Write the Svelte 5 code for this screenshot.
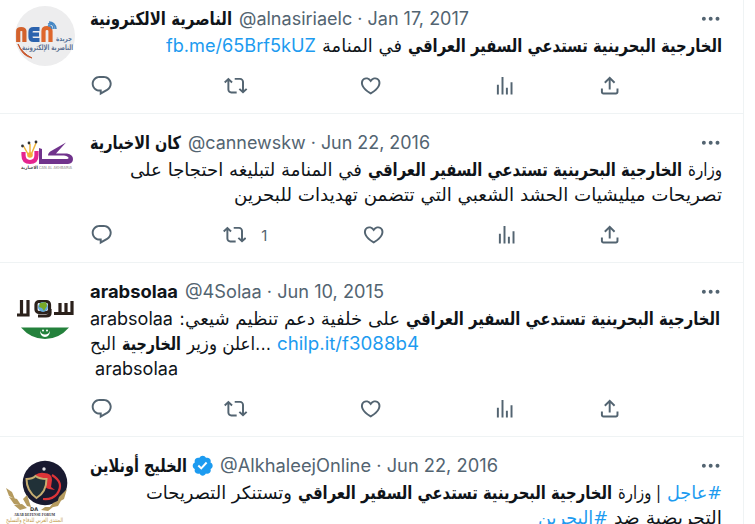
<script lang="ts">
    type Run = { text: string; width: number; bold?: boolean; link?: boolean; latin?: boolean };
    type Tweet = {
        id: string;
        name: string;
        nameWidth: number;
        latinName?: boolean;
        verified?: boolean;
        meta: string;
        metaWidth: number;
        retweets?: number;
        ltr?: boolean;
        lines: Run[][];
    };

    const query = "الخارجية البحرينية تستدعي السفير العراقي";

    const tweets: Tweet[] = [
        {
            id: "nen",
            name: "الناصرية الالكترونية",
            nameWidth: 142,
            meta: "@alnasiriaelc · Jan 17, 2017",
            metaWidth: 230,
            lines: [
                [
                    { text: query, width: 314, bold: true },
                    { text: "في المنامة", width: 80 },
                    { text: "fb.me/65Brf5kUZ", width: 150, link: true, latin: true },
                ],
            ],
        },
        {
            id: "can",
            name: "كان الاخبارية",
            nameWidth: 91,
            meta: "@cannewskw · Jun 22, 2016",
            metaWidth: 242,
            retweets: 1,
            lines: [
                [
                    { text: "وزارة", width: 34 },
                    { text: query, width: 314, bold: true },
                    { text: "في المنامة لتبليغه احتجاجا على", width: 232 },
                ],
                [{ text: "تصريحات ميليشيات الحشد الشعبي التي تتضمن تهديدات للبحرين", width: 488 }],
            ],
        },
        {
            id: "sola",
            name: "arabsolaa",
            nameWidth: 88,
            latinName: true,
            meta: "@4Solaa · Jun 10, 2015",
            metaWidth: 199,
            ltr: true,
            lines: [
                [
                    { text: "arabsolaa", width: 83, latin: true },
                    { text: "على خلفية دعم تنظيم شيعي:", width: 221 },
                    { text: query, width: 314, bold: true },
                ],
                [
                    { text: "البح", width: 26 },
                    { text: "الخارجية", width: 59, bold: true },
                    { text: "...اعلن وزير", width: 84 },
                    { text: "chilp.it/f3088b4", width: 142, link: true, latin: true },
                ],
                [{ text: "\u00a0arabsolaa", width: 88, latin: true }],
            ],
        },
        {
            id: "forum",
            name: "الخليج أونلاين",
            nameWidth: 97,
            verified: true,
            meta: "@AlkhaleejOnline · Jun 22, 2016",
            metaWidth: 278,
            lines: [
                [
                    { text: "#عاجل", width: 55, link: true },
                    { text: "| وزارة", width: 43 },
                    { text: query, width: 314, bold: true },
                    { text: "وتستنكر التصريحات", width: 146 },
                ],
                [
                    { text: "التحريضية ضد", width: 108 },
                    { text: "#البحرين", width: 70, link: true },
                ],
            ],
        },
    ];

    const icons = {
        reply: "M1.751 10c0-4.42 3.584-8 8.005-8h4.366c4.49 0 8.129 3.64 8.129 8.13 0 2.96-1.607 5.68-4.196 7.11l-8.054 4.46v-3.69h-.067c-4.49.1-8.183-3.51-8.183-8.01zm8.005-6c-3.317 0-6.005 2.69-6.005 6 0 3.37 2.77 6.08 6.138 6.01l.351-.01h1.761v2.3l5.087-2.81c1.951-1.08 3.163-3.13 3.163-5.36 0-3.39-2.744-6.13-6.129-6.13H9.756z",
        retweet: "M4.5 3.88l4.432 4.14-1.364 1.46L5.5 7.55V16c0 1.1.896 2 2 2H13v2H7.5c-2.209 0-4-1.79-4-4V7.55L1.432 9.48.068 8.02 4.5 3.88zM16.5 6H11V4h5.5c2.209 0 4 1.79 4 4v8.45l2.068-1.93 1.364 1.46-4.432 4.14-4.432-4.14 1.364-1.46 2.068 1.93V8c0-1.1-.896-2-2-2z",
        like: "M16.697 5.5c-1.222-.06-2.679.51-3.89 2.16l-.805 1.09-.806-1.09C9.984 6.01 8.526 5.44 7.304 5.5c-1.243.07-2.349.78-2.91 1.91-.552 1.12-.633 2.78.479 4.82 1.074 1.97 3.257 4.27 7.129 6.61 3.87-2.34 6.052-4.64 7.126-6.61 1.111-2.04 1.03-3.7.477-4.82-.561-1.13-1.666-1.84-2.908-1.91zm4.187 7.69c-1.351 2.48-4.001 5.12-8.379 7.67l-.503.3-.504-.3c-4.379-2.55-7.029-5.19-8.382-7.67-1.36-2.5-1.41-4.86-.514-6.67.887-1.79 2.647-2.91 4.601-3.01 1.651-.09 3.368.56 4.798 2.01 1.429-1.45 3.146-2.1 4.796-2.01 1.954.1 3.714 1.22 4.601 3.01.896 1.81.846 4.17-.514 6.67z",
        views: "M8.75 21V3h2v18h-2zM18 21V8.5h2V21h-2zM4 21l.004-10h2L6 21H4zm9.248 0v-7h2v7h-2z",
        share: "M12 2.59l5.7 5.7-1.41 1.42L13 6.41V16h-2V6.41l-3.3 3.3-1.41-1.42L12 2.59zM21 15l-.02 3.51c0 1.38-1.12 2.49-2.5 2.49H5.5C4.11 21 3 19.88 3 18.5V15h2v3.5c0 .28.22.5.5.5h12.98c.28 0 .5-.22.5-.5L19 15h2z",
        more: "M3 12c0-1.1.9-2 2-2s2 .9 2 2-.9 2-2 2-2-.9-2-2zm9 2c1.1 0 2-.9 2-2s-.9-2-2-2-2 .9-2 2 .9 2 2 2zm7 0c1.1 0 2-.9 2-2s-.9-2-2-2-2 .9-2 2 .9 2 2 2z",
        verified: "M22.25 12c0-1.43-.88-2.67-2.19-3.34.46-1.39.2-2.9-.81-3.91s-2.52-1.27-3.91-.81c-.66-1.31-1.91-2.19-3.34-2.19s-2.67.88-3.33 2.19c-1.4-.46-2.91-.2-3.92.81s-1.26 2.52-.8 3.91c-1.31.67-2.2 1.91-2.2 3.34s.89 2.67 2.2 3.34c-.46 1.39-.21 2.9.8 3.91s2.52 1.26 3.91.81c.67 1.31 1.91 2.19 3.34 2.19s2.68-.88 3.34-2.19c1.39.45 2.9.2 3.91-.81s1.27-2.52.81-3.91c1.31-.67 2.19-1.91 2.19-3.34zm-11.71 4.2L6.8 12.46l1.41-1.42 2.26 2.26 4.8-5.23 1.47 1.36-6.2 6.77z",
    };

    // Squeeze or stretch a text run so that it fills its slot exactly.
    function fit(node: HTMLElement, width: number) {
        const natural = node.getBoundingClientRect().width;
        if (natural > 0) node.style.transform = `scaleX(${width / natural})`;
    }
</script>

{#snippet icon(name: keyof typeof icons)}
    <svg class="icon" class:badge={name === "verified"} viewBox="0 0 24 24" aria-hidden="true"><path d={icons[name]} /></svg>
{/snippet}

{#snippet fitted(text: string, width: number, latin = false)}
    <span class="slot" class:latin dir={latin ? "ltr" : "rtl"} style:width="{width}px"><span class="run" use:fit={width}>{text}</span></span>
{/snippet}

{#snippet avatar(id: string)}
    <svg class="avatar" viewBox="0 0 60 60" aria-hidden="true">
        {#if id === "nen"}
            <circle cx="30" cy="30" r="30" fill="#ededee" />
            <g fill="none" stroke-width="4.2">
                <path d="M3.200 36V25q0-2 3-2t3.200 2v11" stroke="#d3622d" />
                <path d="M24.500 23h-6q-3 0-3 3v5q0 3 3 3h6M16 28.500h8" stroke="#2b63ae" />
                <path d="M28.500 36V25q0-3 3.500-3t3.500 3v11" stroke="#de672c" />
            </g>
            <g fill="none" stroke="#4386c4" stroke-width="1.600">
                <path d="M33 20q3-1 4 3M33 18q6-1 6 5M34 16q6 0 7 7" />
            </g>
            <path d="M3 38q4 9 14 14-10-2-14-14z" fill="#c9572c" stroke="#c9572c" />
            <text x="57" y="35" font-size="7" font-weight="bold" fill="#54739c" textLength="16" lengthAdjust="spacingAndGlyphs" direction="rtl">جريدة</text>
            <text x="58" y="44" font-size="7.500" font-weight="bold" fill="#5d7293" textLength="51" lengthAdjust="spacingAndGlyphs" direction="rtl">الناصرية الإلكترونية</text>
        {:else if id === "can"}
            <path d="M8.500 22v3q0 7 6.500 7t6.500-7v-4" fill="none" stroke="#e5248f" stroke-width="4.200" />
            <path d="M8.500 16l5 9M21 13l-5 12M15 14v10" fill="none" stroke="#efb63b" stroke-width="1.500" />
            <circle cx="15" cy="25" r="2.800" fill="#f3ad3a" />
            <circle cx="7.500" cy="16" r="1.400" fill="#333" />
            <circle cx="14" cy="13" r="1.400" fill="#333" />
            <circle cx="21" cy="12" r="1.400" fill="#333" />
            <path d="M24 18l3 1v10h25q2.500-.5 1-2t-4-1.500H33q0-3 4-5l14-8-10 11h11q6 1 6 5.500t-5 5H24z" fill="#70338c" />
            <text x="6" y="38.500" font-size="4.500" font-weight="bold" fill="#444" textLength="17" lengthAdjust="spacingAndGlyphs">الاخبارية</text>
            <text x="24" y="38.500" font-size="4" fill="#888" textLength="33" lengthAdjust="spacingAndGlyphs">CAN AL AKHBARIA</text>
        {:else if id === "sola"}
            <g fill="none" stroke="#2b211b" stroke-width="3.200">
                <path d="M2 36h11V21M6.500 21v15" />
                <path d="M57 22v12.500H39M51 24v10M45 24v10M35 30v4q0 3-4 3H23" />
                <rect x="21" y="22.500" width="13.500" height="11" rx="3" />
            </g>
            <circle cx="28" cy="28" r="5" fill="#63aadc" />
            <path d="M25 24l6-1 1 4-3 5-2-3-3-1z" fill="#79a928" />
            <path d="M6 48.500h48Q44 60 30 60T6 48.500z" fill="#24813c" />
            <path d="M25 51.500q0 6.500 5 6.500t5-6.500q-1 4-5 4t-5-4z" fill="#fff" />
            <circle cx="28" cy="51.500" r="1" fill="#fff" />
            <circle cx="32" cy="51.500" r="1" fill="#fff" />
        {:else}
            <circle cx="30" cy="30" r="22.300" fill="#191a30" />
            <circle cx="29" cy="16" r="1.700" fill="#e5e3e6" />
            <path d="M20 22q5-3 9-2 8 0 8 7l-1 7 4 3-6-1q-5-1-5-5l-3-5z" fill="#dd3438" />
            <path d="M37 22q13 8 5 19-5 6-14 5" fill="none" stroke="#dd3438" stroke-width="2.200" />
            <path d="M11.500 26q6 0 9-3 4 3 11 3 0 13-10 19-10-7-10-19z" fill="#213138" stroke="#c6ad71" stroke-width="2" />
            <g fill="#b59b5f">
                <path d="M-9 35l6 4 3 7-6-3zM-6 44l8 2 4 6-7-1zM-1 52l8-1 5 4-7 2zM8 46l4-4 4 12-4-1z" />
                <path d="M52 36l-3 10-7 4 2-6zM47 46l-4 7-9 2 4-5zM38 54l-5 4-7-1 4-3z" />
            </g>
            <text x="15" y="58" font-size="5" font-weight="bold" fill="#333" textLength="8">DA</text>
            <text class="serif" x="-1" y="62.500" font-size="5" font-weight="bold" fill="#35333a" textLength="41" lengthAdjust="spacingAndGlyphs">ARAB DEFENSE FORUM</text>
            <text x="-9" y="69" font-size="6" fill="#c29a4a" textLength="57" lengthAdjust="spacingAndGlyphs">المنتدى العربي للدفاع والتسليح</text>
        {/if}
    </svg>
{/snippet}

<main class="timeline">
    {#each tweets as tweet (tweet.id)}
        <article class="tweet">
            {@render avatar(tweet.id)}
            <div class="content">
                <header class="head">
                    <strong class="name">{@render fitted(tweet.name, tweet.nameWidth, tweet.latinName)}</strong>
                    {#if tweet.verified}{@render icon("verified")}{/if}
                    <span class="meta">{@render fitted(tweet.meta, tweet.metaWidth, true)}</span>
                    <span class="more">{@render icon("more")}</span>
                </header>
                <div class="body" class:ltr={tweet.ltr}>
                    {#each tweet.lines as line}
                        <div class="line">
                            {#each line as run}
                                <span class:bold={run.bold} class:link={run.link}>{@render fitted(run.text, run.width, run.latin)}</span>
                            {/each}
                        </div>
                    {/each}
                </div>
                <div class="actions">
                    <div class="action">{@render icon("reply")}<span class="count"></span></div>
                    <div class="action">{@render icon("retweet")}<span class="count">{tweet.retweets ?? ""}</span></div>
                    <div class="action">{@render icon("like")}<span class="count"></span></div>
                    <div class="action">{@render icon("views")}</div>
                    <div class="share">{@render icon("share")}</div>
                </div>
            </div>
        </article>
    {/each}
</main>

<style>
    :global(body) {
        background: #fff;
        overflow: hidden;
    }

    .timeline {
        box-sizing: border-box;
        width: 744px;
        height: 524px;
        overflow: hidden;
        border-right: 1px solid #eff3f4;
        color: #0f1419;
        font-family: Inter, "DejaVu Sans", sans-serif;
        font-size: 18px;
        line-height: 25px;
        display: flex;
        flex-direction: column;
    }

    /* The list is scrolled a little past the top of the first tweet. */
    .tweet {
        box-sizing: border-box;
        flex: none;
        display: flex;
        gap: 15px;
        padding: 16px 21px 0 15px;
        border-bottom: 1px solid #eff3f4;
    }

    .tweet:first-child {
        margin-top: -10px;
    }

    .avatar {
        flex: none;
        width: 60px;
        height: 60px;
        overflow: visible;
        font-family: "DejaVu Sans", sans-serif;
    }

    .serif {
        font-family: "Liberation Serif", serif;
    }

    .content {
        flex: 1;
        min-width: 0;
    }

    .head {
        display: flex;
        align-items: center;
        height: 25px;
    }

    .name, .bold {
        font-weight: 700;
    }

    .meta {
        margin-left: 7px;
        color: #536471;
    }

    .more {
        margin-left: auto;
        display: flex;
        color: #536471;
    }

    .body {
        direction: rtl;
        margin-top: 2px;
    }

    .body.ltr {
        direction: ltr;
    }

    .line {
        display: flex;
        gap: 6px;
        height: 25px;
    }

    .link {
        color: #1d9bf0;
    }

    .slot {
        display: block;
        direction: ltr;
        height: 25px;
        white-space: nowrap;
        font-family: "DejaVu Sans", sans-serif;
    }

    .slot.latin {
        font-family: Inter, sans-serif;
    }

    .run {
        display: inline-block;
        transform-origin: 0 50%;
        unicode-bidi: plaintext;
    }

    .icon {
        flex: none;
        display: block;
        width: 23.4px;
        height: 23.4px;
        fill: currentColor;
    }

    .icon.badge {
        margin-left: 4px;
        margin-right: -1px;
        color: #1d9bf0;
    }

    .actions {
        display: flex;
        width: 531px;
        height: 24px;
        margin: 16px 0 15px;
        color: #536471;
    }

    .action {
        flex: 1 0 auto;
        display: flex;
        align-items: center;
    }

    .count {
        padding: 0 15px;
        font-family: Inter, sans-serif;
        font-size: 15px;
    }
</style>
